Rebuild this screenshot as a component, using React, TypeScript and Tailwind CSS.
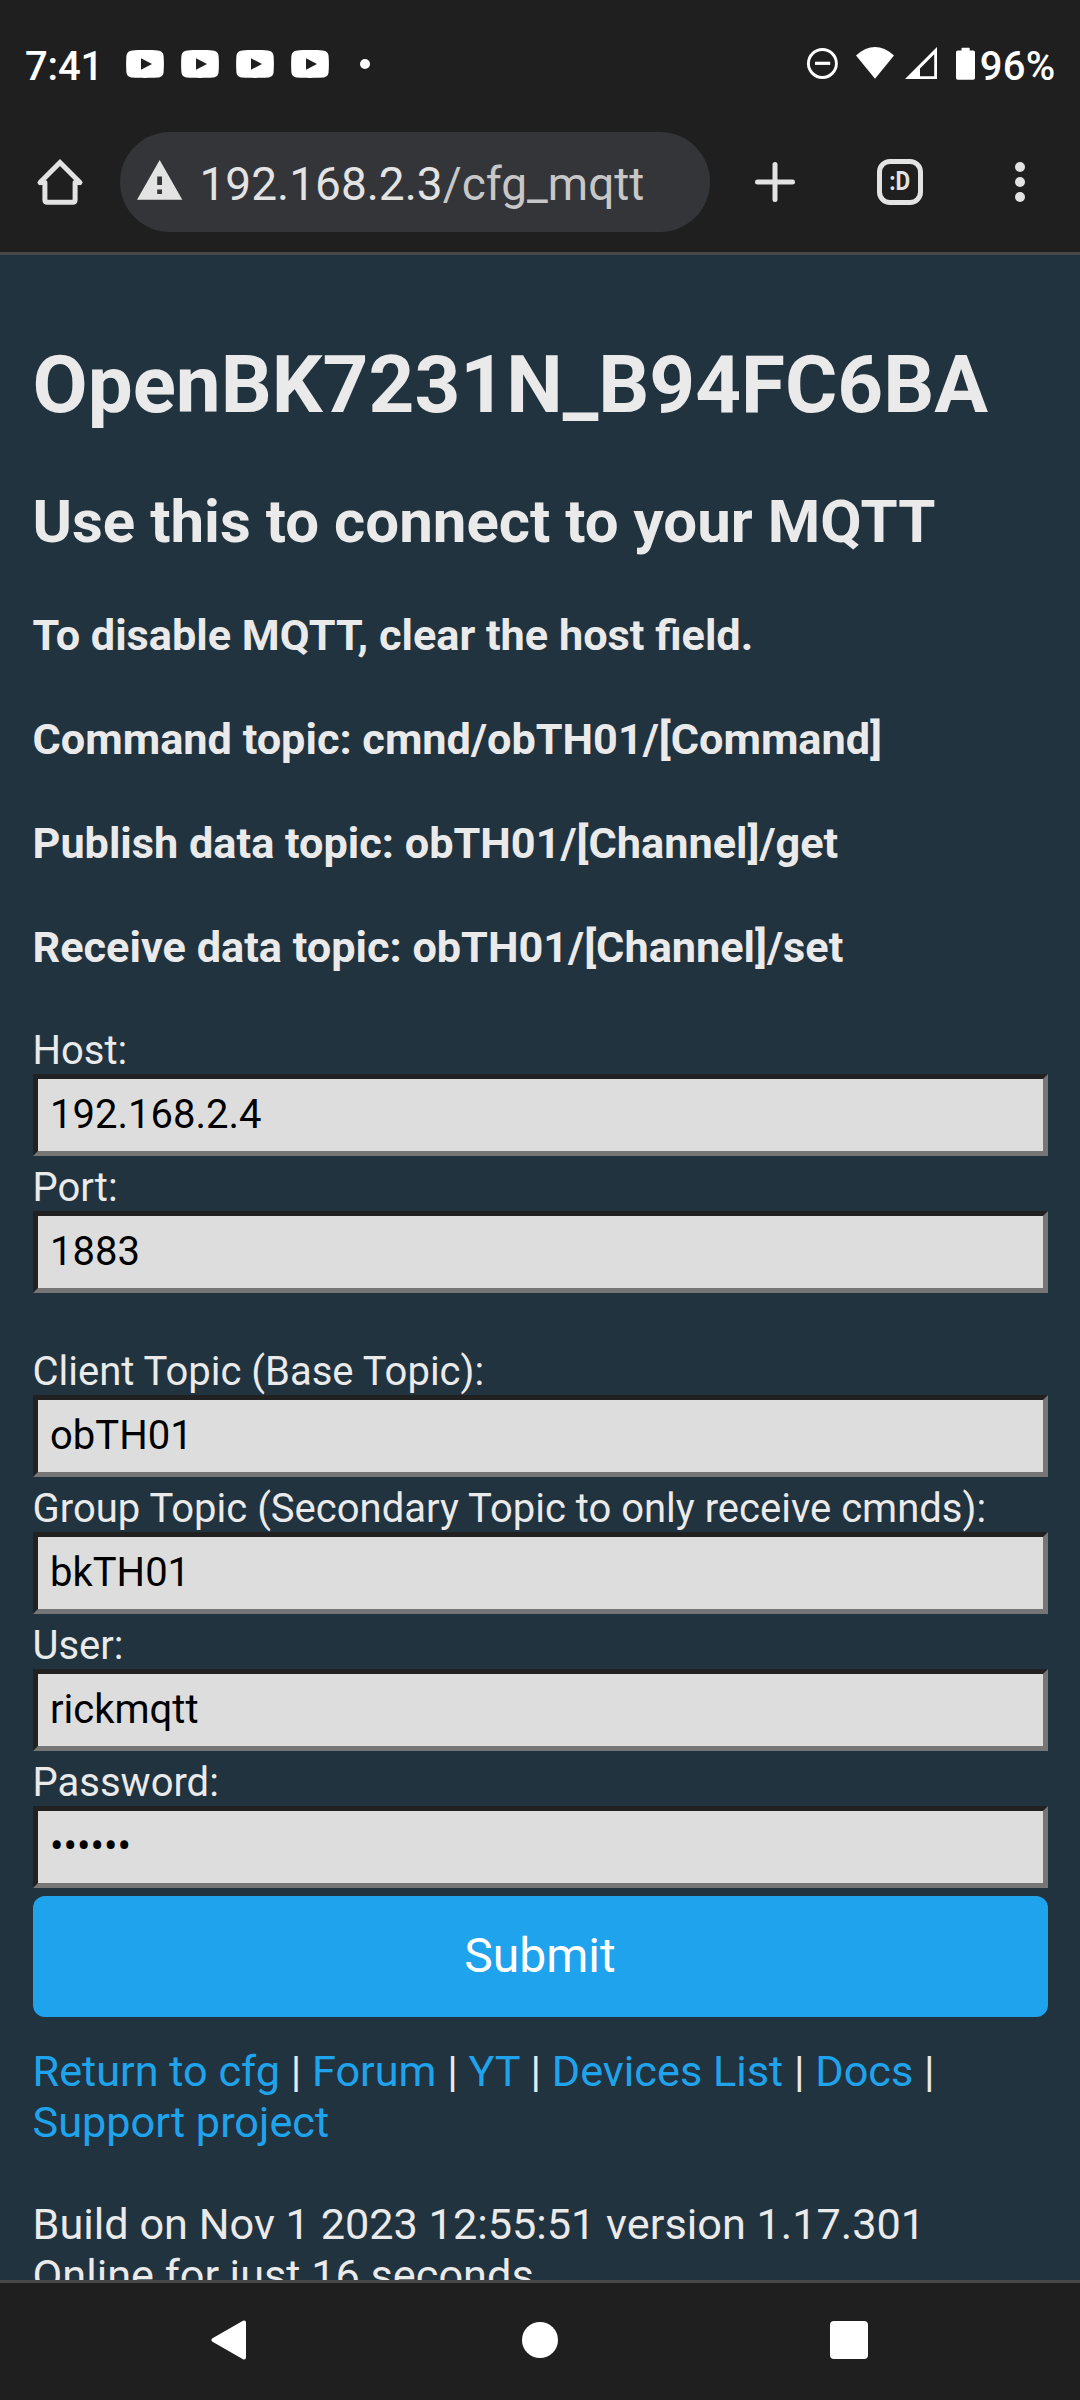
import React from 'react';

function YouTubeIcon() {
  return (
    <svg width="38" height="28" viewBox="0 0 38 28" className="block shrink-0">
      <path
        fill="#fff"
        d="M6.500 .4C12 0 26 0 31.500 .4C35.500 .8 37.2 2.600 37.600 6C38 11 38 17 37.600 22C37.200 25.400 35.500 27.200 31.500 27.600C26 28 12 28 6.500 27.600C2.500 27.200 .8 25.400 .4 22C0 17 0 11 .4 6C.8 2.600 2.500 .8 6.500 .4Z"
      />
      <path fill="#1f1f1f" d="M15 8.300L26 14L15 19.700Z" />
    </svg>
  );
}

function StatusBar() {
  return (
    <div className="flex h-[128px] items-center pl-[25px] pr-[24px] text-white">
      <span className="w-[101px] pt-[5px] text-[40px] leading-[47px] font-medium tracking-[-0.2px]">7:41</span>
      <div className="flex items-center gap-[17px]">
        <YouTubeIcon />
        <YouTubeIcon />
        <YouTubeIcon />
        <YouTubeIcon />
      </div>
      <span className="ml-[31px] size-[10px] rounded-full bg-white" />
      <div className="ml-auto flex items-center">
        <svg width="170" height="36" viewBox="806 46 170 36" className="block">
          <circle cx="822.400" cy="63.500" r="14" fill="none" stroke="#fff" strokeWidth="2.900" />
          <path d="M815 63.300H830.200" stroke="#fff" strokeWidth="3.200" />
          <path fill="#fff" d="M856 55.500Q875 38.700 894 55.500L875 78.700Z" />
          <path fill="#fff" fillRule="evenodd" d="M905 79L937 47V79ZM920 76.200H934.200V54.300L920 68.500Z" />
          <path
            fill="#fff"
            d="M961.500 48.500Q961.500 47.800 962.200 47.800H969Q969.700 47.800 969.700 48.500V50.500H973.200Q975 50.500 975 52.300V78Q975 79.700 973.200 79.700H957.800Q956 79.700 956 78V52.300Q956 50.500 957.800 50.500H961.500Z"
          />
        </svg>
        <span className="ml-[3.700px] w-[76.300px] pt-[5px] text-[40px] leading-[47px] font-medium tracking-[0.3px]">96%</span>
      </div>
    </div>
  );
}

function Toolbar() {
  return (
    <div className="flex h-[108px] items-center">
      <svg width="120" height="48" viewBox="0 158 120 48" className="block shrink-0" fill="none" stroke="#e3e3e3" strokeWidth="5" strokeLinejoin="round">
        <path strokeLinecap="round" strokeLinejoin="miter" d="M40 182.500L60 162.600L80 182.500" />
        <path d="M40 182.500H44.900V200Q44.900 202.300 47.200 202.300H72.800Q75.100 202.300 75.100 200V182.500H80" />
      </svg>
      <div className="flex h-[100px] w-[590px] items-center rounded-full bg-[#343539]">
        <svg width="46" height="40" viewBox="137 159.500 46 40" className="ml-[17px] mb-[5px] block">
          <path fill="#e3e3e3" fillRule="evenodd" d="M159.700 159.500L182.300 199.200H137ZM157.200 176V184.600H162V176ZM157.200 189V193.400H162V189Z" />
        </svg>
        <span className="ml-[16.500px] pt-[4px] text-[46px] leading-[54px] whitespace-nowrap text-[#e3e3e3]">
          192.168.2.3<span className="text-[#c7c7c7]">/cfg_mqtt</span>
        </span>
      </div>
      <svg width="40" height="42" viewBox="0 0 40 42" className="ml-[45px] block" stroke="#e3e3e3" strokeWidth="5" strokeLinecap="round">
        <path d="M20 3.500V38.500M2.500 21H37.500" />
      </svg>
      <div className="ml-[82px] flex size-[46px] items-center justify-center rounded-[13px] border-[5px] border-[#e3e3e3] text-[25px] leading-[30px] font-bold text-[#e3e3e3]">
        <span className="scale-x-90">:D</span>
      </div>
      <div className="ml-[92px] flex flex-col gap-[5px]">
        <span className="size-[10px] rounded-full bg-[#e3e3e3]" />
        <span className="size-[10px] rounded-full bg-[#e3e3e3]" />
        <span className="size-[10px] rounded-full bg-[#e3e3e3]" />
      </div>
    </div>
  );
}

function Field({ label, value, type = 'text' }: { label: string; value: string; type?: string }) {
  return (
    <label className="block text-[40px] leading-[47px]">
      <span className="block whitespace-nowrap">{label}</span>
      <input
        type={type}
        defaultValue={value}
        className="block h-[82px] w-full border-[5px] border-t-[#212121] border-r-[#767676] border-b-[#767676] border-l-[#212121] bg-[#dddddd] px-[12.500px] pt-[12px] pb-[13px] text-black outline-none"
      />
    </label>
  );
}

const topics = [
  'To disable MQTT, clear the host field.',
  'Command topic: cmnd/obTH01/[Command]',
  'Publish data topic: obTH01/[Channel]/get',
  'Receive data topic: obTH01/[Channel]/set',
];

const links = ['Return to cfg', 'Forum', 'YT', 'Devices List', 'Docs', 'Support project'];

export default function App() {
  return (
    <div className="flex h-[2400px] w-[1080px] flex-col overflow-hidden bg-[#1f1f1f] font-[Roboto,sans-serif]">
      <header className="h-[255px] shrink-0 border-b-[3px] border-[#474747]">
        <StatusBar />
        <Toolbar />
      </header>
      <main className="min-h-0 flex-1 overflow-hidden bg-[#21333e] px-[32.500px] pt-[83px] text-[#eaeaea]">
        <h1 className="text-[80px] leading-[94px] font-bold whitespace-nowrap">OpenBK7231N_B94FC6BA</h1>
        <h2 className="mt-[54px] text-[60px] leading-[71px] font-bold whitespace-nowrap">Use this to connect to your MQTT</h2>
        <div className="mt-[53px] flex flex-col gap-[53px] text-[43.250px] leading-[51px] font-bold whitespace-nowrap">
          {topics.map((t) => (
            <h4 key={t}>{t}</h4>
          ))}
        </div>
        <form className="mt-[54px]" onSubmit={(e: React.FormEvent) => e.preventDefault()}>
          <div className="flex flex-col gap-[8px]">
            <Field label="Host:" value="192.168.2.4" />
            <Field label="Port:" value="1883" />
          </div>
          <div className="mt-[55px] flex flex-col gap-[8px]">
            <Field label="Client Topic (Base Topic):" value="obTH01" />
            <Field label="Group Topic (Secondary Topic to only receive cmnds):" value="bkTH01" />
            <Field label="User:" value="rickmqtt" />
            <Field label="Password:" value="secret" type="password" />
            <button className="block h-[121px] w-full rounded-[12px] bg-[#1fa3ec] pb-[2px] text-[48px] leading-[57px] text-white">Submit</button>
          </div>
        </form>
        <footer className="mt-[29px] text-[43.250px] leading-[51px]">
          <p>
            {links.map((l, i) => (
              <React.Fragment key={l}>
                {i > 0 && ' | '}
                <a className="text-[#1fa3ec]">{l}</a>
              </React.Fragment>
            ))}
          </p>
          <p className="mt-[51px]">Build on Nov 1 2023 12:55:51 version 1.17.301</p>
          <p>Online for just 16 seconds</p>
        </footer>
      </main>
      <nav className="h-[120px] shrink-0 border-t-[3px] border-[#474747] pt-[36px]">
        <div className="flex items-center pl-[211px]">
          <svg width="35" height="42" viewBox="0 0 35 42" className="block">
            <path fill="#fff" stroke="#fff" strokeWidth="4" strokeLinejoin="round" d="M2.500 21L33 3.500V38.500Z" />
          </svg>
          <span className="ml-[276px] size-[36px] rounded-full bg-white" />
          <span className="ml-[272px] size-[38px] rounded-[4px] bg-white" />
        </div>
      </nav>
    </div>
  );
}
